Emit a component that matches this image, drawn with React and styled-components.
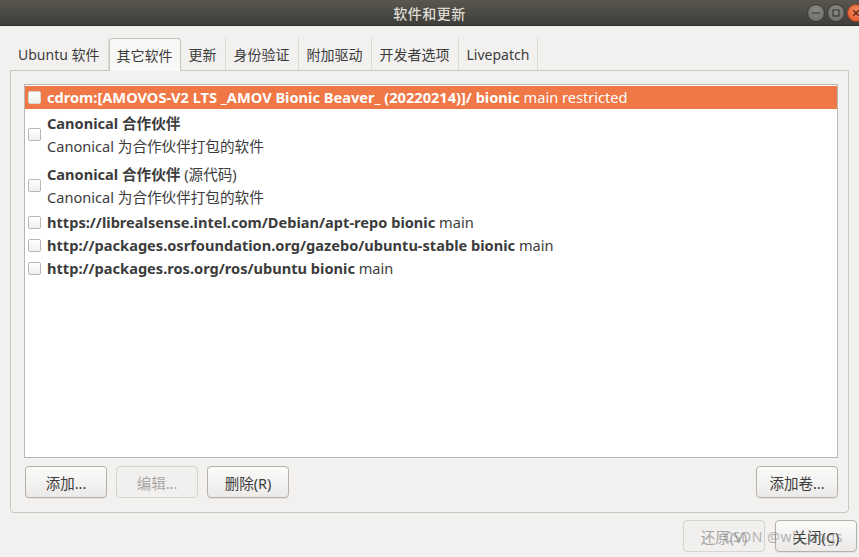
import React from 'react'
import styled, { createGlobalStyle } from 'styled-components'

const GlobalStyle = createGlobalStyle`
  html, body {
    margin: 0;
    padding: 0;
    background: #f2f1f0;
  }
  body {
    font-family: "Noto Sans", "Noto Sans CJK SC", sans-serif;
    font-size: 14px;
    color: #3c3c3c;
  }
`

const tabs = ['Ubuntu 软件', '其它软件', '更新', '身份验证', '附加驱动', '开发者选项', 'Livepatch']

const sources = [
  { bold: 'cdrom:[AMOVOS-V2 LTS _AMOV Bionic Beaver_ (20220214)]/ bionic', rest: 'main restricted', selected: true },
  { bold: 'Canonical 合作伙伴', sub: 'Canonical 为合作伙伴打包的软件' },
  { bold: 'Canonical 合作伙伴', extra: ' (源代码)', sub: 'Canonical 为合作伙伴打包的软件' },
  { bold: 'https://librealsense.intel.com/Debian/apt-repo bionic', rest: 'main' },
  { bold: 'http://packages.osrfoundation.org/gazebo/ubuntu-stable bionic', rest: 'main' },
  { bold: 'http://packages.ros.org/ros/ubuntu bionic', rest: 'main' },
]

const App = () => {
  return (
    <>
      <GlobalStyle />
      <Window>
        <TitleBar>
          <Title>软件和更新</Title>
          <WinButtons>
            <WinButton>
              <svg width="8" height="8" viewBox="0 0 8 8"><path d="M0.5 4h7" stroke="#3a3935" strokeWidth="1.2" /></svg>
            </WinButton>
            <WinButton>
              <svg width="8" height="8" viewBox="0 0 8 8"><rect x="1" y="1" width="6" height="6" fill="none" stroke="#3a3935" strokeWidth="1.2" /></svg>
            </WinButton>
            <WinButton close>
              <svg width="8" height="8" viewBox="0 0 8 8"><path d="M1.2 1.2l5.6 5.6M6.8 1.2l-5.6 5.6" stroke="#5a2414" strokeWidth="1.3" /></svg>
            </WinButton>
          </WinButtons>
        </TitleBar>

        <Body>
          <TabBar>
            {tabs.map((t, i) => (
              <Tab key={t} active={i === 1}>{t}</Tab>
            ))}
          </TabBar>

          <Panel>
            <SourceList>
              {sources.map((s, i) => (
                <Row key={i} selected={s.selected} tall={!!s.sub}>
                  <Check selected={s.selected} />
                  <RowText>
                    <Line>
                      <b>{s.bold}</b>
                      {s.extra}
                      {s.rest && <span> {s.rest}</span>}
                    </Line>
                    {s.sub && <Line>{s.sub}</Line>}
                  </RowText>
                </Row>
              ))}
            </SourceList>

            <ButtonRow>
              <Button>添加...</Button>
              <Button disabled>编辑...</Button>
              <Button>删除(R)</Button>
              <Spacer />
              <Button>添加卷...</Button>
            </ButtonRow>
          </Panel>

          <ActionRow>
            <Button disabled>还原(V)</Button>
            <Button>关闭(C)</Button>
            <Watermark>CSDN @wh_dogs</Watermark>
          </ActionRow>
        </Body>
      </Window>
    </>
  )
}

const Window = styled.div`
  width: 859px;
  height: 557px;
  display: flex;
  flex-direction: column;
  overflow: hidden;
  background: #f2f1f0;
`

const TitleBar = styled.div`
  position: relative;
  height: 25px;
  flex-shrink: 0;
  display: flex;
  align-items: center;
  justify-content: center;
  background: linear-gradient(#58564f, #3f3e3a);
  border-bottom: 1px solid #2f2e2b;
`

const Title = styled.div`
  color: #dfdbd2;
  font-size: 14px;
  font-weight: 500;
  letter-spacing: 0.5px;
`

const WinButtons = styled.div`
  position: absolute;
  right: -6px;
  top: 4px;
  display: flex;
  gap: 2px;
`

const WinButton = styled.div`
  width: 16px;
  height: 16px;
  border-radius: 50%;
  display: flex;
  align-items: center;
  justify-content: center;
  background: ${({ close }) =>
    close ? 'radial-gradient(circle at 50% 35%, #f58a5e, #e0582c)' : 'radial-gradient(circle at 50% 35%, #8c8a84, #6a6863)'};
  border: 1px solid ${({ close }) => (close ? '#a8401d' : '#3a3935')};
`

const Body = styled.div`
  flex: 1;
  display: flex;
  flex-direction: column;
  padding: 12px 2px 0 10px;
`

const TabBar = styled.div`
  display: flex;
  height: 32px;
  align-items: stretch;
  margin-right: 8px;
`

const Tab = styled.div`
  display: flex;
  align-items: center;
  padding: 0 ${({ active }) => (active ? '7px' : '8px')};
  font-size: 14px;
  color: #3c3c3c;
  border-right: 1px solid ${({ active }) => (active ? '#c6c4c1' : '#dcdad6')};
  ${({ active }) =>
    active &&
    `
    background: #f8f8f7;
    border: 1px solid #c6c4c1;
    border-bottom: none;
    border-radius: 4px 4px 0 0;
    margin-bottom: -1px;
    position: relative;
    z-index: 1;
  `}
`

const Panel = styled.div`
  flex-shrink: 0;
  height: 443px;
  box-sizing: border-box;
  margin-right: 8px;
  border: 1px solid #c9c7c3;
  border-radius: 0 0 4px 4px;
  padding: 13px 10px 0 13px;
  display: flex;
  flex-direction: column;
`

const SourceList = styled.div`
  height: 374px;
  box-sizing: border-box;
  background: #ffffff;
  border: 1px solid #b9b7b3;
  padding-top: 1px;
  display: flex;
  flex-direction: column;
`

const Row = styled.div`
  display: flex;
  align-items: center;
  height: ${({ tall }) => (tall ? '51px' : '23px')};
  padding-left: 3px;
  background: ${({ selected }) => (selected ? '#f07746' : 'transparent')};
  color: ${({ selected }) => (selected ? '#ffffff' : '#3c3c3c')};
`

const Check = styled.div`
  width: 11px;
  height: 11px;
  flex-shrink: 0;
  border: 1px solid ${({ selected }) => (selected ? '#d9d7d3' : '#b9b7b3')};
  border-radius: 2px;
  background: linear-gradient(#ffffff, #f1f0ef);
  margin-right: 6px;
`

const RowText = styled.div`
  display: flex;
  flex-direction: column;
  gap: 2px;
`

const Line = styled.div`
  font-size: 14.6px;
  line-height: 21px;
  white-space: nowrap;

  b {
    font-weight: 700;
  }
`

const ButtonRow = styled.div`
  display: flex;
  gap: 9px;
  margin-top: 8px;
  padding-left: 1px;
`

const Spacer = styled.div`
  flex: 1;
`

const Button = styled.button`
  width: 82px;
  height: 32px;
  box-sizing: border-box;
  font-family: "Noto Sans", "Noto Sans CJK SC", sans-serif;
  font-size: 14.5px;
  border-radius: 4px;
  color: ${({ disabled }) => (disabled ? '#a7a6a4' : '#3c3c3c')};
  border: 1px solid ${({ disabled }) => (disabled ? '#d6d4d1' : '#b4b1ad')};
  background: ${({ disabled }) => (disabled ? '#f1f0ef' : 'linear-gradient(#fbfbfa, #ebeae8)')};
  box-shadow: ${({ disabled }) => (disabled ? 'none' : '0 1px 0 rgba(0,0,0,0.06)')};
  padding: 0;
`

const ActionRow = styled.div`
  position: relative;
  display: flex;
  justify-content: flex-end;
  gap: 10px;
  margin-top: 7px;
`

const Watermark = styled.div`
  position: absolute;
  right: 14px;
  top: 7px;
  font-size: 14px;
  letter-spacing: 0.6px;
  color: rgba(110, 110, 110, 0.5);
  pointer-events: none;
`

export default App
